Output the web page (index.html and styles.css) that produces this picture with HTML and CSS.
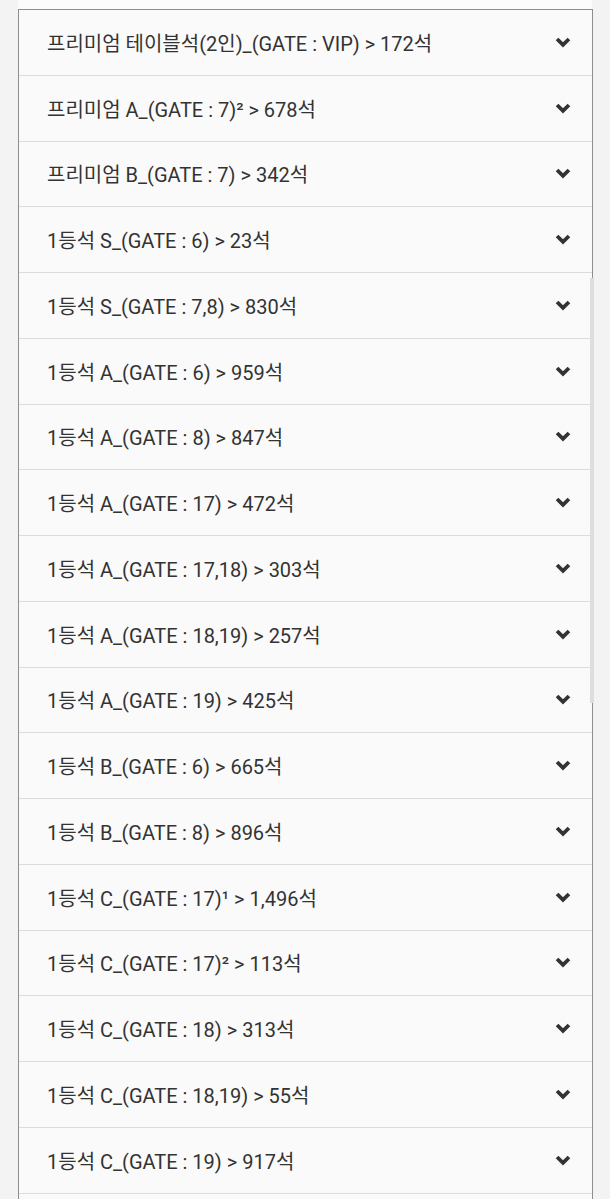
FILE: index.html
```html
<!DOCTYPE html>
<html lang="ko">
<head>
<meta charset="utf-8">
<link rel="stylesheet" href="styles.css">
</head>
<body>
<div class="top"></div>
<div class="list">
  <div class="row"><span class="label">프리미엄 테이블석(2인)_(GATE : VIP) &gt; 172석</span><svg class="chev" viewBox="0 0 14 10"><polyline points="1.6,1.8 7,7.2 12.4,1.8"/></svg></div>
  <div class="row"><span class="label">프리미엄 A_(GATE : 7)² &gt; 678석</span><svg class="chev" viewBox="0 0 14 10"><polyline points="1.6,1.8 7,7.2 12.4,1.8"/></svg></div>
  <div class="row"><span class="label">프리미엄 B_(GATE : 7) &gt; 342석</span><svg class="chev" viewBox="0 0 14 10"><polyline points="1.6,1.8 7,7.2 12.4,1.8"/></svg></div>
  <div class="row"><span class="label">1등석 S_(GATE : 6) &gt; 23석</span><svg class="chev" viewBox="0 0 14 10"><polyline points="1.6,1.8 7,7.2 12.4,1.8"/></svg></div>
  <div class="row"><span class="label">1등석 S_(GATE : 7,8) &gt; 830석</span><svg class="chev" viewBox="0 0 14 10"><polyline points="1.6,1.8 7,7.2 12.4,1.8"/></svg></div>
  <div class="row"><span class="label">1등석 A_(GATE : 6) &gt; 959석</span><svg class="chev" viewBox="0 0 14 10"><polyline points="1.6,1.8 7,7.2 12.4,1.8"/></svg></div>
  <div class="row"><span class="label">1등석 A_(GATE : 8) &gt; 847석</span><svg class="chev" viewBox="0 0 14 10"><polyline points="1.6,1.8 7,7.2 12.4,1.8"/></svg></div>
  <div class="row"><span class="label">1등석 A_(GATE : 17) &gt; 472석</span><svg class="chev" viewBox="0 0 14 10"><polyline points="1.6,1.8 7,7.2 12.4,1.8"/></svg></div>
  <div class="row"><span class="label">1등석 A_(GATE : 17,18) &gt; 303석</span><svg class="chev" viewBox="0 0 14 10"><polyline points="1.6,1.8 7,7.2 12.4,1.8"/></svg></div>
  <div class="row"><span class="label">1등석 A_(GATE : 18,19) &gt; 257석</span><svg class="chev" viewBox="0 0 14 10"><polyline points="1.6,1.8 7,7.2 12.4,1.8"/></svg></div>
  <div class="row"><span class="label">1등석 A_(GATE : 19) &gt; 425석</span><svg class="chev" viewBox="0 0 14 10"><polyline points="1.6,1.8 7,7.2 12.4,1.8"/></svg></div>
  <div class="row"><span class="label">1등석 B_(GATE : 6) &gt; 665석</span><svg class="chev" viewBox="0 0 14 10"><polyline points="1.6,1.8 7,7.2 12.4,1.8"/></svg></div>
  <div class="row"><span class="label">1등석 B_(GATE : 8) &gt; 896석</span><svg class="chev" viewBox="0 0 14 10"><polyline points="1.6,1.8 7,7.2 12.4,1.8"/></svg></div>
  <div class="row"><span class="label">1등석 C_(GATE : 17)¹ &gt; 1,496석</span><svg class="chev" viewBox="0 0 14 10"><polyline points="1.6,1.8 7,7.2 12.4,1.8"/></svg></div>
  <div class="row"><span class="label">1등석 C_(GATE : 17)² &gt; 113석</span><svg class="chev" viewBox="0 0 14 10"><polyline points="1.6,1.8 7,7.2 12.4,1.8"/></svg></div>
  <div class="row"><span class="label">1등석 C_(GATE : 18) &gt; 313석</span><svg class="chev" viewBox="0 0 14 10"><polyline points="1.6,1.8 7,7.2 12.4,1.8"/></svg></div>
  <div class="row"><span class="label">1등석 C_(GATE : 18,19) &gt; 55석</span><svg class="chev" viewBox="0 0 14 10"><polyline points="1.6,1.8 7,7.2 12.4,1.8"/></svg></div>
  <div class="row"><span class="label">1등석 C_(GATE : 19) &gt; 917석</span><svg class="chev" viewBox="0 0 14 10"><polyline points="1.6,1.8 7,7.2 12.4,1.8"/></svg></div>
  <div class="row"></div>
  <div class="thumb"></div>
</div>
</body>
</html>
```
FILE: styles.css
```css
html, body {
  margin: 0;
  padding: 0;
  background: #f3f3f3;
  overflow: hidden;
  height: 1199px;
}
.top {
  height: 9px;
  margin: 0 18px;
  background: #fbfbfb;
}
.list {
  position: relative;
  margin: 0 17px 0 18px;
  border: 1px solid #8e8e8e;
  border-bottom: none;
  background: #fafafa;
}
.row {
  display: flex;
  align-items: center;
  justify-content: space-between;
  box-sizing: border-box;
  height: 65.75px;
  padding: 0 21px 0 28px;
  border-bottom: 1px solid #dcdcdc;
  font-family: Roboto, "Noto Sans CJK KR", sans-serif;
  font-size: 20px;
  color: #333333;
  letter-spacing: 0;
}
.chev {
  width: 16px;
  height: 11px;
  fill: none;
  stroke: #333333;
  stroke-width: 3.4;
  stroke-linecap: butt;
  stroke-linejoin: miter;
}
.thumb {
  position: absolute;
  top: 268px;
  right: -2px;
  width: 4px;
  height: 425px;
  background: #dedede;
}
```
